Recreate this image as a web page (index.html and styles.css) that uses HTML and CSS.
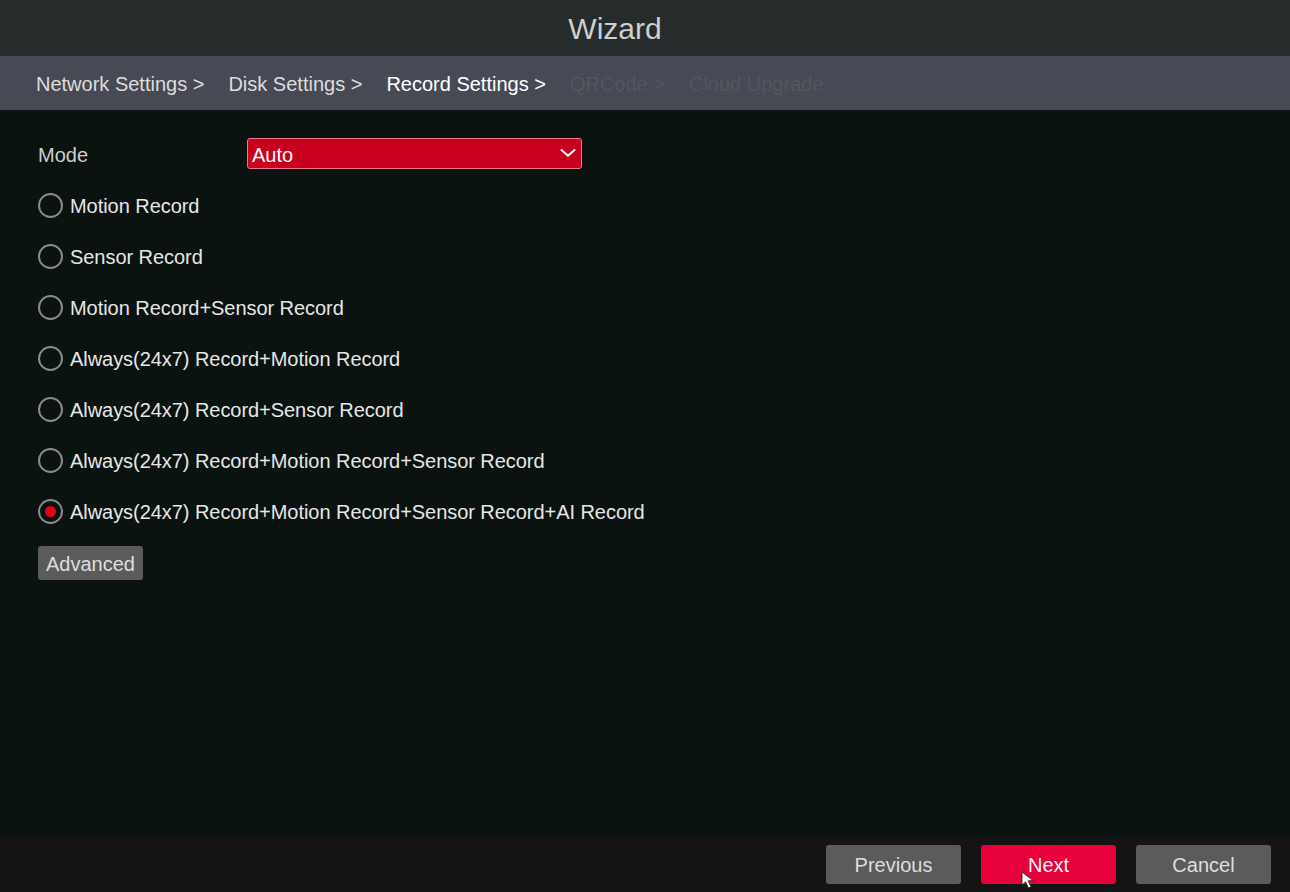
FILE: index.html
```html
<!DOCTYPE html>
<html>
<head>
<meta charset="utf-8">
<link rel="stylesheet" href="styles.css">
</head>
<body>
<div class="app">
  <div class="titlebar"><span class="title">Wizard</span></div>
  <div class="steps">
    <span class="step done">Network Settings &gt;</span>
    <span class="step done">Disk Settings &gt;</span>
    <span class="step current">Record Settings &gt;</span>
    <span class="step todo">QRCode &gt;</span>
    <span class="step todo">Cloud Upgrade</span>
  </div>
  <div class="main">
    <div class="mode-row">
      <span class="mode-label">Mode</span>
      <div class="select">
        <span class="select-text">Auto</span>
        <svg class="chev" width="18" height="10" viewBox="0 0 18 10"><path d="M2.5 2 L9 7.8 L15.5 2" fill="none" stroke="#fff" stroke-width="2" stroke-linecap="round" stroke-linejoin="round"/></svg>
      </div>
    </div>
    <div class="options">
      <div class="opt"><span class="radio"></span><span class="opt-text">Motion Record</span></div>
      <div class="opt"><span class="radio"></span><span class="opt-text">Sensor Record</span></div>
      <div class="opt"><span class="radio"></span><span class="opt-text">Motion Record+Sensor Record</span></div>
      <div class="opt"><span class="radio"></span><span class="opt-text">Always(24x7) Record+Motion Record</span></div>
      <div class="opt"><span class="radio"></span><span class="opt-text">Always(24x7) Record+Sensor Record</span></div>
      <div class="opt"><span class="radio"></span><span class="opt-text">Always(24x7) Record+Motion Record+Sensor Record</span></div>
      <div class="opt"><span class="radio checked"></span><span class="opt-text">Always(24x7) Record+Motion Record+Sensor Record+AI Record</span></div>
    </div>
    <div class="adv-wrap"><button class="btn adv">Advanced</button></div>
  </div>
  <div class="footer">
    <button class="btn fbtn">Previous</button>
    <button class="btn fbtn primary">Next</button>
    <button class="btn fbtn">Cancel</button>
  </div>
  <svg class="cursor" width="16" height="20" viewBox="0 0 16 20"><path d="M1 1 L1 14 L4.5 10.8 L7.5 17 L10 15.8 L7.2 9.8 L12 9.6 Z" fill="#fff" stroke="#222" stroke-width="0.8"/></svg>
</div>
</body>
</html>
```
FILE: styles.css
```css
* { box-sizing: border-box; }
html, body { margin: 0; padding: 0; }
body {
  background: #0b1311;
  font-family: "Liberation Sans", Arial, sans-serif;
  font-size: 20px;
  color: #e6e6e6;
}
.app {
  position: relative;
  width: 1290px;
  height: 892px;
  display: flex;
  flex-direction: column;
  overflow: hidden;
}
.titlebar {
  height: 56px;
  background: #252c2b;
  display: flex;
  align-items: center;
  justify-content: center;
  padding-right: 60px;
  padding-top: 2px;
}
.title {
  font-size: 30px;
  color: #cfcfcf;
  line-height: 1;
}
.steps {
  height: 54px;
  background: #474a54;
  display: flex;
  align-items: center;
  gap: 24px;
  padding-left: 36px;
  padding-top: 2px;
}
.step { white-space: nowrap; }
.step.done { color: #dcdcdc; }
.step.current { color: #ffffff; }
.step.todo { color: #53565f; }
.main {
  flex: 1;
  padding: 28px 0 0 38px;
}
.mode-row {
  display: flex;
  align-items: center;
  height: 31px;
}
.mode-label {
  width: 209px;
  color: #cdcdcd;
  padding-top: 3px;
}
.select {
  width: 335px;
  height: 31px;
  background: #c8001e;
  border: 1px solid #e57d8b;
  border-radius: 3px;
  display: flex;
  align-items: center;
  justify-content: space-between;
  padding: 0 5px 0 4px;
  color: #fff;
}
.select-text { padding-top: 3px; }
.chev { margin-right: -1px; margin-top: -2px; }
.options {
  margin-top: 11px;
  display: flex;
  flex-direction: column;
}
.opt {
  height: 51px;
  display: flex;
  align-items: center;
  gap: 7px;
}
.opt-text {
  padding-top: 1px;
  letter-spacing: -0.05px;
}
.radio {
  width: 25px;
  height: 25px;
  border-radius: 50%;
  border: 2px solid #8a8a8a;
  display: flex;
  align-items: center;
  justify-content: center;
  flex: none;
}
.radio.checked::after {
  content: "";
  width: 11px;
  height: 11px;
  border-radius: 50%;
  background: #e3001b;
}
.adv-wrap { margin-top: 9px; }
.btn {
  font-family: "Liberation Sans", Arial, sans-serif;
  font-size: 20px;
  color: #dedede;
  background: #5b5b5b;
  border: none;
  border-radius: 3px;
  padding: 2px 0 0 0;
}
.adv {
  width: 105px;
  height: 34px;
}
.footer {
  height: 57px;
  background: #141414;
  display: flex;
  justify-content: flex-end;
  gap: 20px;
  padding: 10px 19px 0 0;
}
.fbtn {
  width: 135px;
  height: 39px;
}
.fbtn.primary {
  background: #e8003b;
  color: #f4f4f4;
}
.cursor {
  position: absolute;
  left: 1021px;
  top: 871px;
}
```
